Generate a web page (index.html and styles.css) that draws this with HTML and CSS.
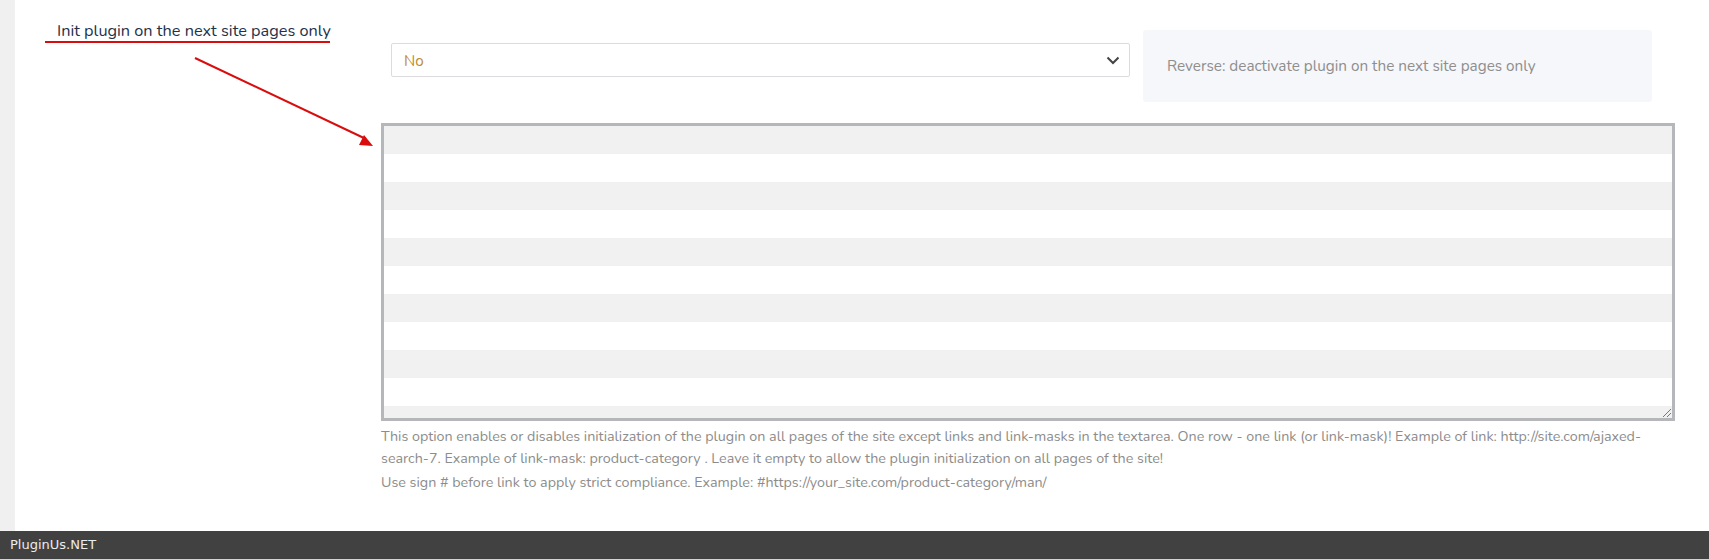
FILE: index.html
```html
<!DOCTYPE html>
<html>
<head>
<meta charset="utf-8">
<link rel="stylesheet" href="styles.css">
</head>
<body>
<div class="page">
  <div class="strip"></div>
  <div class="main">
    <div class="label-col">
      <div class="label">Init plugin on the next site pages only</div>
      <svg class="annot" width="380" height="160" viewBox="0 0 380 160">
        <line x1="30" y1="42" x2="315" y2="42" stroke="#d90d0d" stroke-width="2"/>
        <line x1="180" y1="58" x2="351" y2="139" stroke="#d90d0d" stroke-width="2"/>
        <polygon points="358,146 344,145 349,135" fill="#d90d0d"/>
      </svg>
    </div>
    <div class="opt-col">
      <div class="top-row">
        <div class="select">
          <span class="sel-value">No</span>
          <svg class="chev" width="14" height="9" viewBox="0 0 14 9"><polyline points="1.5,1.5 7,7 12.5,1.5" fill="none" stroke="#444" stroke-width="2"/></svg>
        </div>
        <div class="reverse">Reverse: deactivate plugin on the next site pages only</div>
      </div>
      <div class="textarea"><span class="grip"></span></div>
      <p class="help">This option enables or disables initialization of the plugin on all pages of the site except links and link-masks in the textarea. One row - one link (or link-mask)! Example of link: http://site.com/ajaxed-search-7. Example of link-mask: product-category . Leave it empty to allow the plugin initialization on all pages of the site!</p>
      <p class="help help2">Use sign # before link to apply strict compliance. Example: #https://your_site.com/product-category/man/</p>
    </div>
  </div>
</div>
<div class="footer">PluginUs.NET</div>
</body>
</html>
```
FILE: styles.css
```css
html, body {
  margin: 0;
  padding: 0;
  background: #fff;
}
body {
  font-family: "Nunito", "Lato", "Open Sans", sans-serif;
  width: 1709px;
  height: 559px;
  overflow: hidden;
}
.page {
  display: flex;
  height: 531px;
}
.strip {
  width: 15px;
  background: #f0f0f1;
  flex: none;
}
.main {
  flex: 1;
  display: flex;
  background: #fff;
}
.label-col {
  width: 366px;
  flex: none;
  position: relative;
}
.label {
  margin: 21px 0 0 42px;
  font-size: 16.3px;
  line-height: 20px;
  color: #23324a;
}
.annot {
  position: absolute;
  left: 0;
  top: 0;
}
.opt-col {
  width: 1294px;
  flex: none;
}
.top-row {
  display: flex;
  align-items: flex-start;
  margin-top: 30px;
}
.select {
  margin: 13px 0 0 10px;
  width: 739px;
  height: 34px;
  box-sizing: border-box;
  border: 1px solid #dcdcde;
  border-radius: 2px;
  display: flex;
  align-items: center;
  justify-content: space-between;
  padding: 0 9px 0 12px;
}
.sel-value {
  color: #c18a2e;
  font-size: 15.2px;
  padding-top: 1px;
}
.chev {
  display: block;
}
.reverse {
  margin-left: 13px;
  width: 509px;
  height: 72px;
  box-sizing: border-box;
  background: #f6f7fb;
  border-radius: 3px;
  display: flex;
  align-items: center;
  padding-left: 24px;
  font-size: 15.3px;
  color: #8e8e8e;
}
.textarea {
  margin-top: 21px;
  height: 298px;
  box-sizing: border-box;
  border: 3px solid #b5b7bb;
  background: repeating-linear-gradient(to bottom, #f1f1f1 0, #f1f1f1 28px, #fff 28px, #fff 56px);
  position: relative;
}
.grip {
  position: absolute;
  right: 1px;
  bottom: 1px;
  width: 8px;
  height: 8px;
  background: linear-gradient(135deg, transparent 0, transparent 45%, #777 45%, #777 52%, transparent 52%, transparent 70%, #777 70%, #777 77%, transparent 77%);
}
.help {
  margin: 5px 0 0 0;
  font-size: 14.3px;
  line-height: 22px;
  color: #8c8c8c;
}
.help2 {
  margin-top: 2px;
}
.footer {
  height: 28px;
  background: #414141;
  color: #ececec;
  font-family: "DejaVu Sans", sans-serif;
  font-size: 13px;
  line-height: 28px;
  padding-left: 10px;
}
```
